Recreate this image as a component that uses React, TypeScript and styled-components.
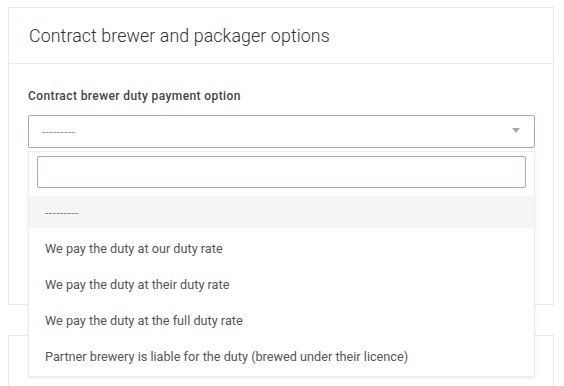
import React from 'react'
import styled, { createGlobalStyle } from 'styled-components'

const GlobalStyle = createGlobalStyle`
  body {
    margin: 0;
    background: #fff;
    font-family: Roboto, 'Liberation Sans', sans-serif;
  }
`

const Page = styled.div`
  padding: 7px 10px 0 8px;
  display: flex;
  flex-direction: column;
  gap: 30px;
  height: 386px;
  overflow: hidden;
  box-sizing: border-box;
`

const Card = styled.section<{ $open?: boolean }>`
  border: 1px solid #e8e8e8;
  background: #fff;
  flex-shrink: 0;
  ${({ $open }) => ($open ? 'height: 298px;' : 'height: 120px;')}
  box-sizing: border-box;
`

const CardHeader = styled.header`
  height: 56px;
  border-bottom: 1px solid #ececec;
  display: flex;
  align-items: center;
  padding: 0 20px;
  box-sizing: border-box;
`

const Title = styled.h2`
  margin: 0;
  font-size: 17.8px;
  font-weight: 300;
  color: #333;
  letter-spacing: 0.1px;
`

const CardBody = styled.div`
  padding: 25px 18px 0 19px;
`

const Label = styled.label`
  display: block;
  font-size: 12px;
  font-weight: 500;
  color: #444;
  margin-bottom: 12px;
  letter-spacing: 0.4px;
`

const SelectWrap = styled.div`
  position: relative;
`

const SelectBox = styled.div`
  height: 33px;
  border: 1px solid #9aaad6;
  border-radius: 2px;
  display: flex;
  align-items: center;
  justify-content: space-between;
  padding: 0 14px 0 13px;
  box-sizing: border-box;
`

const Placeholder = styled.span`
  font-size: 12px;
  color: #999;
  letter-spacing: 0.4px;
`

const Caret = styled.span`
  width: 0;
  height: 0;
  border-left: 4px solid transparent;
  border-right: 4px solid transparent;
  border-top: 5px solid #a8a8a8;
  margin-top: -2px;
`

const Dropdown = styled.div`
  position: absolute;
  top: 36px;
  left: 0;
  right: 0;
  background: #fff;
  border: 1px solid #ececec;
  box-shadow: 0 1px 3px rgba(0, 0, 0, 0.08);
  padding: 4px 0 4px;
  z-index: 10;
`

const SearchRow = styled.div`
  padding: 0 8px 8px;
`

const SearchInput = styled.input`
  display: block;
  width: 100%;
  height: 32px;
  box-sizing: border-box;
  border: 1px solid #9aaad6;
  border-radius: 2px;
  outline: none;
  font: inherit;
`

const Options = styled.ul`
  list-style: none;
  margin: 0;
  padding: 0;
  display: flex;
  flex-direction: column;
  gap: 4px;
`

const Option = styled.li<{ $active?: boolean }>`
  height: 32px;
  display: flex;
  align-items: center;
  padding: 1px 16px 0;
  box-sizing: border-box;
  font-size: ${({ $active }) => ($active ? '12px' : '12.7px')};
  color: ${({ $active }) => ($active ? '#888' : '#555')};
  background: ${({ $active }) => ($active ? '#f4f5f7' : 'transparent')};
  letter-spacing: ${({ $active }) => ($active ? '0.4px' : '0')};
`

const options = [
  '---------',
  'We pay the duty at our duty rate',
  'We pay the duty at their duty rate',
  'We pay the duty at the full duty rate',
  'Partner brewery is liable for the duty (brewed under their licence)'
]

export default function App() {
  return (
    <>
      <GlobalStyle />
      <Page>
        <Card $open>
          <CardHeader>
            <Title>Contract brewer and packager options</Title>
          </CardHeader>
          <CardBody>
            <Label>Contract brewer duty payment option</Label>
            <SelectWrap>
              <SelectBox>
                <Placeholder>---------</Placeholder>
                <Caret />
              </SelectBox>
              <Dropdown>
                <SearchRow>
                  <SearchInput type="text" />
                </SearchRow>
                <Options>
                  {options.map((o, i) => (
                    <Option key={o} $active={i === 0}>
                      {o}
                    </Option>
                  ))}
                </Options>
              </Dropdown>
            </SelectWrap>
          </CardBody>
        </Card>
        <Card />
      </Page>
    </>
  )
}
